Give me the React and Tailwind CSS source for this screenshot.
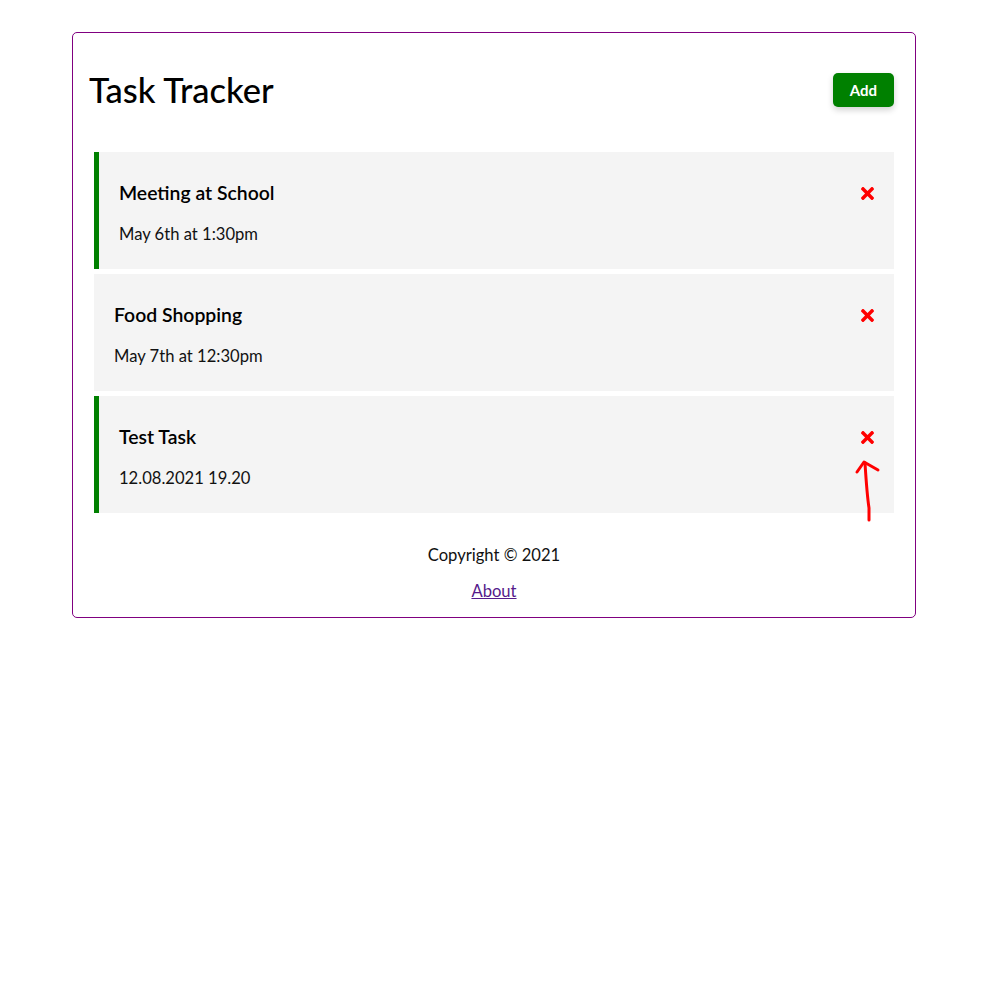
import React, { useState } from 'react';
import { FaTimes } from 'react-icons/fa';

const initialTasks = [
  { id: 1, text: 'Meeting at School', day: 'May 6th at 1:30pm', reminder: true },
  { id: 2, text: 'Food Shopping', day: 'May 7th at 12:30pm', reminder: false },
  { id: 3, text: 'Test Task', day: '12.08.2021 19.20', reminder: true },
];

const Task = ({ task, onDelete }) => (
  <div
    className={`bg-[#f4f4f4] h-[117px] pt-[30px] pr-5 cursor-pointer ${
      task.reminder ? 'border-l-[5px] border-[#008000] pl-5' : 'pl-5'
    }`}
  >
    <h3 className="flex items-center justify-between text-[19.4px] leading-[22px] font-semibold text-black">
      {task.text}
      <FaTimes className="w-[13px] h-[19px]" color="red" onClick={() => onDelete(task.id)} />
    </h3>
    <p className="mt-[20px] text-[16.6px] leading-5 text-[#111]">{task.day}</p>
  </div>
);

const App = () => {
  const [tasks, setTasks] = useState(initialTasks);

  const deleteTask = (id) => setTasks(tasks.filter((t) => t.id !== id));

  return (
    <div className="relative min-h-screen bg-white pt-8" style={{ fontFamily: 'Lato, "Noto Sans", sans-serif' }}>
      <div className="w-[844px] ml-[72px] border border-[#800080] rounded-[5px] px-4 pt-4 pb-[14px]">
        <header className="flex items-center justify-between h-[78px]">
          <h1 className="text-[34.5px] leading-10 font-medium text-black pt-[4px]">Task Tracker</h1>
          <button className="mr-[5px] mt-[4px] w-[61px] h-[34px] rounded-[5px] bg-[#008000] text-white text-[15px] font-bold shadow-[0_3px_6px_rgba(0,0,0,0.18)]">
            Add
          </button>
        </header>
        <div className="mt-[25px] mx-[5px] flex flex-col gap-[5px]">
          {tasks.map((task) => (
            <Task key={task.id} task={task} onDelete={deleteTask} />
          ))}
        </div>
        <footer className="mt-[32px] text-center">
          <p className="text-[16.6px] leading-5 text-[#111]">Copyright © 2021</p>
          <a href="#about" className="inline-block mt-4 text-[16.6px] leading-5 text-[#551a8b] underline">
            About
          </a>
        </footer>
      </div>
      <svg
        className="absolute left-[850px] top-[455px]"
        width="35"
        height="70"
        viewBox="0 0 35 70"
        fill="none"
        stroke="#ff0000"
        strokeWidth="3"
        strokeLinecap="round"
        strokeLinejoin="round"
      >
        <path d="M19 65 L19 53 Q17 40 15 8" />
        <path d="M7 17 L14 7 L28 15" />
      </svg>
    </div>
  );
};

export default App;
